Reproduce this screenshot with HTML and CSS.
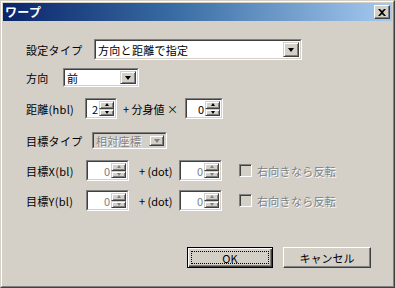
FILE: index.html
```html
<!DOCTYPE html>
<html lang="ja">
<head>
<meta charset="utf-8">
<link rel="stylesheet" href="styles.css">
</head>
<body>
<div class="window">
  <div class="frame">
    <div class="titlebar">
      <span class="title">ワープ</span>
      <span class="close"><svg width="8" height="7" viewBox="0 0 8 7"><path d="M0 0h2l2 2 2-2h2L5 3.5 8 7H6L4 5 2 7H0l3-3.5z" fill="#000"/></svg></span>
    </div>
    <div class="content">
      <div class="row r1">
        <span class="label l1">設定タイプ</span>
        <div class="combo c1"><span class="val">方向と距離で指定</span><span class="dd"><i class="tri"></i></span></div>
      </div>
      <div class="row r2">
        <span class="label l2">方向</span>
        <div class="combo c2"><span class="val">前</span><span class="dd"><i class="tri"></i></span></div>
      </div>
      <div class="row r3">
        <span class="label l3">距離(hbl)</span>
        <div class="spin s1"><span class="num">2</span><span class="btns"><span class="sb"><i class="up"></i></span><span class="sb"><i class="dn"></i></span></span></div>
        <span class="mid m1">+ 分身値 ×</span>
        <div class="spin s2"><span class="num">0</span><span class="btns"><span class="sb"><i class="up"></i></span><span class="sb"><i class="dn"></i></span></span></div>
      </div>
      <div class="row r4">
        <span class="label l4">目標タイプ</span>
        <div class="combo c3 disabled"><span class="val">相対座標</span><span class="dd"><i class="tri"></i></span></div>
      </div>
      <div class="row r5">
        <span class="label l5">目標X(bl)</span>
        <div class="spin s3 disabled"><span class="num">0</span><span class="btns"><span class="sb"><i class="up"></i></span><span class="sb"><i class="dn"></i></span></span></div>
        <span class="mid m2">+ (dot)</span>
        <div class="spin s4 disabled"><span class="num">0</span><span class="btns"><span class="sb"><i class="up"></i></span><span class="sb"><i class="dn"></i></span></span></div>
        <span class="check"><span class="box"></span><span class="ctext">右向きなら反転</span></span>
      </div>
      <div class="row r6">
        <span class="label l5">目標Y(bl)</span>
        <div class="spin s3 disabled"><span class="num">0</span><span class="btns"><span class="sb"><i class="up"></i></span><span class="sb"><i class="dn"></i></span></span></div>
        <span class="mid m2">+ (dot)</span>
        <div class="spin s4 disabled"><span class="num">0</span><span class="btns"><span class="sb"><i class="up"></i></span><span class="sb"><i class="dn"></i></span></span></div>
        <span class="check"><span class="box"></span><span class="ctext">右向きなら反転</span></span>
      </div>
      <div class="buttons">
        <div class="btn default"><span class="focus">OK</span></div>
        <div class="btn cancel"><span>キャンセル</span></div>
      </div>
    </div>
  </div>
</div>
</body>
</html>
```

FILE: styles.css
```css
html, body {
  margin: 0;
  padding: 0;
  background: #d4d0c8;
}
body {
  width: 395px;
  height: 288px;
  overflow: hidden;
  font-family: "Noto Sans CJK JP", "Noto Sans", sans-serif;
  font-size: 11px;
  color: #000;
}
.window {
  width: 395px;
  height: 288px;
  box-sizing: border-box;
  border: 1px solid;
  border-color: #d4d0c8 #404040 #404040 #d4d0c8;
  background: #d4d0c8;
}
.frame {
  height: 100%;
  box-sizing: border-box;
  border: 1px solid;
  border-color: #ffffff #808080 #808080 #ffffff;
  padding: 1px;
}
.titlebar {
  height: 18px;
  background: linear-gradient(to right, #0a246a 0%, #3a6ea5 45%, #a6caf0 100%);
  display: flex;
  align-items: center;
  justify-content: space-between;
  padding: 0 2px 0 2px;
}
.title {
  color: #fff;
  font-weight: bold;
  font-size: 12px;
  line-height: 18px;
  letter-spacing: 0.3px;
}
.close {
  width: 16px;
  height: 14px;
  box-sizing: border-box;
  background: #d4d0c8;
  border: 1px solid;
  border-color: #ffffff #404040 #404040 #ffffff;
  box-shadow: inset -1px -1px 0 #808080;
  display: flex;
  align-items: center;
  justify-content: center;
}
.close svg { display: block; margin-left: -1px; }

.content {
  padding: 18px 0 0 23px;
  display: flex;
  flex-direction: column;
}
.row {
  display: flex;
  align-items: center;
}
.label {
  white-space: nowrap;
  letter-spacing: 0.3px;
  flex: none;
}
.l1 { width: 68px; }
.l2 { width: 37px; }
.l3 { width: 59px; }
.l4 { width: 66px; }
.l5 { width: 60px; }

.r1 { height: 21px; }
.r2 { height: 19px; margin-top: 8px; }
.r3 { height: 21px; margin-top: 11px; }
.r4 { height: 17px; margin-top: 13px; }
.r5 { height: 21px; margin-top: 11px; }
.r6 { height: 21px; margin-top: 9px; }

/* combo */
.combo {
  box-sizing: border-box;
  border: 1px solid;
  border-color: #808080 #ffffff #ffffff #808080;
  background: #fff;
  display: flex;
  align-items: stretch;
  position: relative;
  flex: none;
}
.combo::before {
  content: "";
  position: absolute;
  inset: 0;
  border: 1px solid;
  border-color: #404040 #d4d0c8 #d4d0c8 #404040;
  pointer-events: none;
}
.combo .val {
  flex: 1;
  padding-left: 3px;
  display: flex;
  align-items: center;
  white-space: nowrap;
  letter-spacing: 0.3px;
}
.dd {
  width: 16px;
  margin: 2px 2px 2px 0;
  box-sizing: border-box;
  background: #d4d0c8;
  border: 1px solid;
  border-color: #d4d0c8 #404040 #404040 #d4d0c8;
  box-shadow: inset 1px 1px 0 #fff, inset -1px -1px 0 #808080;
  display: flex;
  align-items: center;
  justify-content: center;
  position: relative;
  z-index: 1;
}
.tri {
  display: block;
  width: 0;
  height: 0;
  border-left: 3.5px solid transparent;
  border-right: 3.5px solid transparent;
  border-top: 4px solid #000;
  margin-top: 1px;
}
.c1 { width: 208px; height: 21px; }
.c2 { width: 76px; height: 19px; }
.c3 { width: 75px; height: 17px; }
.c3 .dd { width: 15px; }

.disabled { background: #d4d0c8; }
.combo.disabled .val { color: #808080; text-shadow: 1px 1px 0 #fff; }
.disabled .tri { border-top-color: #808080; }

/* spin */
.spin {
  box-sizing: border-box;
  border: 1px solid;
  border-color: #808080 #ffffff #ffffff #808080;
  background: #fff;
  height: 21px;
  display: flex;
  position: relative;
  flex: none;
}
.spin::before {
  content: "";
  position: absolute;
  inset: 0;
  border: 1px solid;
  border-color: #404040 #d4d0c8 #d4d0c8 #404040;
  pointer-events: none;
}
.spin .num {
  flex: 1;
  padding-right: 1px;
  display: flex;
  align-items: center;
  justify-content: flex-end;
}
.spin .btns {
  width: 15px;
  margin: 2px 2px 2px 0;
  display: flex;
  flex-direction: column;
  position: relative;
  z-index: 1;
}
.sb {
  flex: 1;
  box-sizing: border-box;
  background: #d4d0c8;
  border: 1px solid;
  border-color: #d4d0c8 #404040 #404040 #d4d0c8;
  box-shadow: inset 1px 1px 0 #fff, inset -1px -1px 0 #808080;
  display: flex;
  align-items: center;
  justify-content: center;
}
.up, .dn {
  display: block;
  width: 0;
  height: 0;
  border-left: 2.5px solid transparent;
  border-right: 2.5px solid transparent;
}
.up { border-bottom: 3px solid #000; }
.dn { border-top: 3px solid #000; }
.spin.disabled .num { color: #808080; text-shadow: 1px 1px 0 #fff; }
.spin.disabled .up { border-bottom-color: #808080; }
.spin.disabled .dn { border-top-color: #808080; }

.s1 { width: 32px; }
.s2 { width: 38px; }
.s3 { width: 43px; }
.s4 { width: 43px; }
.mid { white-space: nowrap; flex: none; }
.m1 { margin-left: 6px; width: 62px; }
.m2 { margin-left: 10px; width: 40px; }

.check {
  display: flex;
  align-items: center;
  margin-left: 17px;
  color: #808080;
  text-shadow: 1px 1px 0 #fff;
  letter-spacing: 0.3px;
  white-space: nowrap;
}
.box {
  width: 13px;
  height: 13px;
  box-sizing: border-box;
  border: 1px solid;
  border-color: #808080 #ffffff #ffffff #808080;
  box-shadow: inset 1px 1px 0 #404040, inset -1px -1px 0 #d4d0c8;
  background: #d4d0c8;
  margin-right: 5px;
  flex: none;
}

.buttons {
  display: flex;
  margin-top: 36px;
  margin-left: 161px;
  gap: 10px;
}
.btn {
  height: 21px;
  box-sizing: border-box;
  border: 1px solid;
  border-color: #ffffff #404040 #404040 #ffffff;
  box-shadow: inset -1px -1px 0 #808080;
  background: #d4d0c8;
  display: flex;
  align-items: center;
  justify-content: center;
}
.btn.default {
  width: 86px;
  border: 1px solid #000;
  box-shadow: inset 1px 1px 0 #fff, inset -1px -1px 0 #404040, inset -2px -2px 0 #808080;
  padding: 3px;
}
.btn.default .focus {
  flex: 1;
  align-self: stretch;
  border: 1px dotted #000;
  display: flex;
  align-items: center;
  justify-content: center;
}
.btn.cancel { width: 88px; }
```
